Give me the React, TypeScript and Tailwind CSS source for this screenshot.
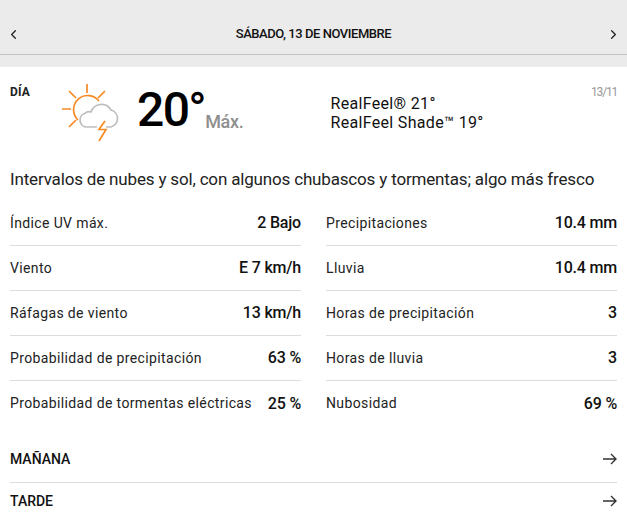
import React from "react";
import { ChevronLeft, ChevronRight } from "lucide-react";

const leftRows = [
  ["Índice UV máx.", "2 Bajo"],
  ["Viento", "E 7 km/h"],
  ["Ráfagas de viento", "13 km/h"],
  ["Probabilidad de precipitación", "63 %"],
  ["Probabilidad de tormentas eléctricas", "25 %"],
];

const rightRows = [
  ["Precipitaciones", "10.4 mm"],
  ["Lluvia", "10.4 mm"],
  ["Horas de precipitación", "3"],
  ["Horas de lluvia", "3"],
  ["Nubosidad", "69 %"],
];

const WeatherIcon = () => (
  <svg width="60" height="60" viewBox="0 0 60 60" fill="none" className="block">
    <g stroke="#f78a24" strokeWidth="1.7">
      <path d="M27 1v9M9 8l7 7M45 8l-7 7M2 26h9M9 44l7-7" />
      <path d="M39 18a14.200 14.200 0 1 0-21 19" />
    </g>
    <path
      d="M37 44H27a7 7 0 0 1-2-13.700a6.500 6.500 0 0 1 6-1.300a11 11 0 0 1 20-2a8.800 8.800 0 0 1 0 17h-5"
      stroke="#bdbdbd"
      strokeWidth="1.700"
    />
    <path d="M45 38l-6 8.500h7l-7 11.500" stroke="#f78a24" strokeWidth="1.700" />
  </svg>
);

const ArrowIcon = () => (
  <svg width="14" height="12" viewBox="0 0 14 12" fill="none" stroke="#333" strokeWidth="1.4">
    <path d="M0 6h13M8 1l5 5-5 5" />
  </svg>
);

const Row = ({ label, value, last }: { label: string; value: string; last: boolean }) => (
  <div className={`flex h-[45px] items-center justify-between ${last ? "" : "border-b border-[#dcdcdc]"}`}>
    <span className="text-[14px] tracking-[0.37px] text-[#222]">{label}</span>
    <span className="text-[16px] font-medium tracking-[-0.2px] text-[#111]">{value}</span>
  </div>
);

const App = () => {
  return (
    <div className="h-[522px] w-[627px] overflow-hidden bg-white font-['Roboto',sans-serif]">
      <div className="h-[67px] bg-[#ebebeb]">
        <div className="flex h-[55px] items-center justify-between border-b border-[#c4c4c4] px-[6px] pt-[14px]">
          <ChevronLeft size={15} color="#222" />
          <span className="text-[13px] font-medium tracking-[-0.45px] text-[#111]">SÁBADO, 13 DE NOVIEMBRE</span>
          <ChevronRight size={15} color="#222" />
        </div>
      </div>

      <div className="flex h-[92px] px-[10px] pt-[16px]">
        <span className="w-[50px] text-[12px] font-bold tracking-[0.2px] text-[#222]">DÍA</span>
        <WeatherIcon />
        <div className="ml-[17px] flex items-start">
          <span className="text-[48px] leading-[54px] font-medium tracking-[-1.6px] text-black">20°</span>
          <span className="mt-[25px] text-[18px] font-medium tracking-[-0.3px] text-[#8f8f8f]">Máx.</span>
        </div>
        <div className="ml-[87px] mt-[11px] text-[16px] leading-[19px] tracking-[0.33px] text-[#111]">
          <div>RealFeel® 21°</div>
          <div>RealFeel Shade™ 19°</div>
        </div>
        <span className="ml-auto text-[12px] tracking-[-1.2px] text-[#999]">13/11</span>
      </div>

      <p className="h-[42px] px-[10px] text-[17px] leading-[40px] tracking-[-0.17px] text-[#222]">
        Intervalos de nubes y sol, con algunos chubascos y tormentas; algo más fresco
      </p>

      <div className="grid grid-cols-2 gap-x-[25px] px-[10px]">
        <div>
          {leftRows.map(([label, value], i) => (
            <Row key={label} label={label} value={value} last={i === leftRows.length - 1} />
          ))}
        </div>
        <div>
          {rightRows.map(([label, value], i) => (
            <Row key={label} label={label} value={value} last={i === rightRows.length - 1} />
          ))}
        </div>
      </div>

      <div className="px-[10px] pt-[10px]">
        <div className="flex h-[47px] items-center justify-between border-b border-[#dcdcdc]">
          <span className="text-[14px] font-medium text-[#111]">MAÑANA</span>
          <ArrowIcon />
        </div>
        <div className="flex h-[36px] items-center justify-between">
          <span className="text-[14px] font-medium text-[#111]">TARDE</span>
          <ArrowIcon />
        </div>
      </div>
    </div>
  );
};

export default App;
